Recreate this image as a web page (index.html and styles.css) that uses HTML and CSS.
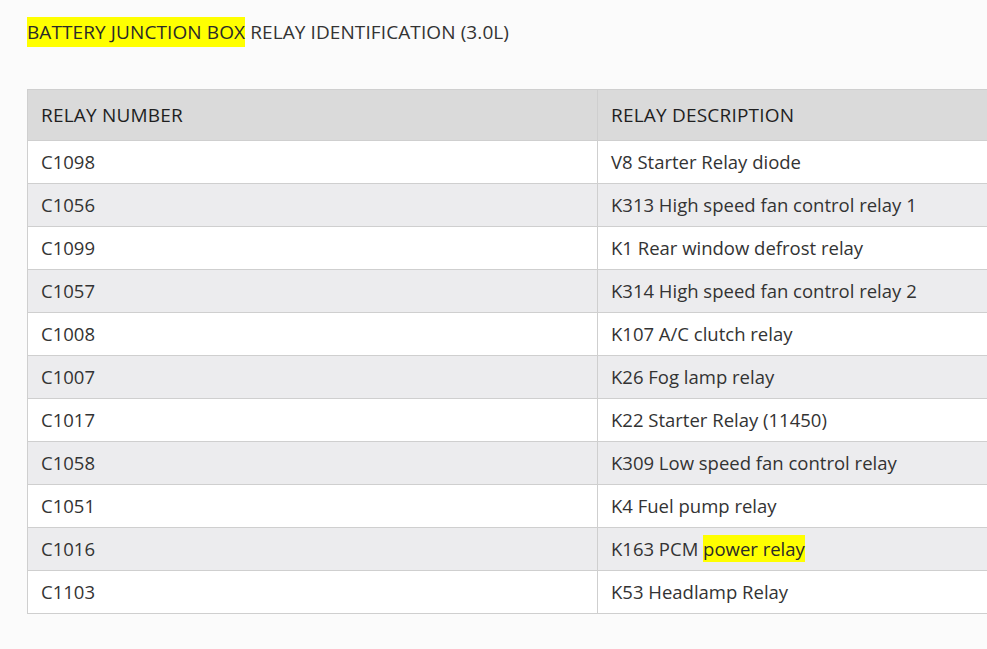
FILE: index.html
```html
<!DOCTYPE html>
<html>
<head>
<meta charset="utf-8">
<link rel="stylesheet" href="styles.css">
</head>
<body>
<div class="page">
  <p class="title"><mark class="hl hl-title">BATTERY JUNCTION BOX</mark> RELAY IDENTIFICATION (3.0L)</p>
  <table class="relays">
    <thead>
      <tr><th class="c1">RELAY NUMBER</th><th>RELAY DESCRIPTION</th></tr>
    </thead>
    <tbody>
      <tr><td class="c1">C1098</td><td>V8 Starter Relay diode</td></tr>
      <tr><td class="c1">C1056</td><td>K313 High speed fan control relay 1</td></tr>
      <tr><td class="c1">C1099</td><td>K1 Rear window defrost relay</td></tr>
      <tr><td class="c1">C1057</td><td>K314 High speed fan control relay 2</td></tr>
      <tr><td class="c1">C1008</td><td>K107 A/C clutch relay</td></tr>
      <tr><td class="c1">C1007</td><td>K26 Fog lamp relay</td></tr>
      <tr><td class="c1">C1017</td><td>K22 Starter Relay (11450)</td></tr>
      <tr><td class="c1">C1058</td><td>K309 Low speed fan control relay</td></tr>
      <tr><td class="c1">C1051</td><td>K4 Fuel pump relay</td></tr>
      <tr><td class="c1">C1016</td><td>K163 PCM <mark class="hl">power relay</mark></td></tr>
      <tr><td class="c1">C1103</td><td>K53 Headlamp Relay</td></tr>
    </tbody>
  </table>
</div>
</body>
</html>
```
FILE: styles.css
```css
html, body {
  margin: 0;
  padding: 0;
  background: #fbfbfb;
  overflow: hidden;
}
.page {
  padding: 18px 0 0 27px;
  font-family: "Open Sans", "Liberation Sans", sans-serif;
  color: #2d2d2d;
  width: 1200px;
}
.title {
  margin: 0 0 43px 0;
  font-size: 19px;
  line-height: 28px;
  color: #333;
  letter-spacing: 0.1px;
}
.hl {
  background: #ffff00;
  color: #2a2a2a;
  padding: 1px 0;
}
.hl-title {
  padding: 2px 0 2px 0;
}
.relays {
  border-collapse: collapse;
  width: 1140px;
  font-size: 18.5px;
  background: #fff;
  border: 1px solid #cfcfcf;
}
.relays th {
  background: #dadada;
  font-weight: normal;
  font-size: 19px;
  letter-spacing: 0.2px;
  text-align: left;
  height: 50px;
  padding: 0 13px;
  border: 1px solid #cfcfcf;
  color: #1f1f1f;
}
.relays td {
  height: 40px;
  padding: 0 13px 2px 13px;
  border: 1px solid #cfcfcf;
  color: #333;
}
.relays .c1 {
  width: 543px;
}
.relays tbody tr:nth-child(even) td {
  background: #ececee;
}
```
